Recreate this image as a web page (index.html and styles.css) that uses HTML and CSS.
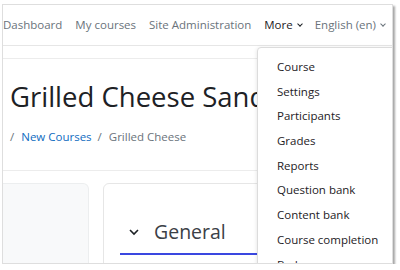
FILE: index.html
```html
<!DOCTYPE html>
<html lang="en">
<head>
    <meta charset="UTF-8">
    <title>Grilled Cheese Sandwich</title>
    <link rel="stylesheet" href="styles.css">
</head>
<body>
    <div class="shot">
        <nav class="navbar">
            <a href="#">Dashboard</a>
            <a href="#">My courses</a>
            <a href="#">Site Administration</a>
            <a href="#" class="active">More <span class="caret"></span></a>
            <a href="#">English &#8206;(en)&#8206; <span class="caret"></span></a>

            <ul class="dropdown-menu">
                <li><a href="#">Course</a></li>
                <li><a href="#">Settings</a></li>
                <li><a href="#">Participants</a></li>
                <li><a href="#">Grades</a></li>
                <li><a href="#">Reports</a></li>
                <li><a href="#">Question bank</a></li>
                <li><a href="#">Content bank</a></li>
                <li><a href="#">Course completion</a></li>
                <li><a href="#">Badges</a></li>
            </ul>
        </nav>

        <div class="page">
            <header class="page-header">
                <h1>Grilled Cheese Sandwich</h1>
                <ol class="breadcrumb">
                    <li><a href="#">New Courses</a></li>
                    <li>Grilled Cheese</li>
                </ol>
            </header>

            <div class="course-content">
                <aside class="course-index"></aside>
                <section class="section-card">
                    <h3 class="section-title">
                        <svg width="12" height="12" viewBox="0 0 12 12"><path d="M2 4 L6 8 L10 4" fill="none" stroke="#1d2125" stroke-width="1.6"/></svg>
                        General
                    </h3>
                </section>
            </div>
        </div>
    </div>
</body>
</html>
```

FILE: styles.css
```css
/* General Styles */
body {
    margin: 0;
    padding: 4px 0 0 2px;
    background-color: #fff;
    font-family: "Open Sans", "Noto Sans", sans-serif;
    color: #1d2125;
}

a {
    text-decoration: none;
}

/* Screenshot frame */
.shot {
    position: relative;
    width: 389px;
    height: 258px;
    border: 1px solid #dedede;
    box-shadow: 2px 2px 2px rgba(0, 0, 0, 0.35);
    overflow: hidden;
    background-color: #fff;
}

/* Navbar */
.navbar {
    display: flex;
    align-items: center;
    gap: 13px;
    height: 39px;
    padding: 0 0 1px 0;
    border-bottom: 1px solid #e6e6e6;
    font-size: 11.5px;
    white-space: nowrap;
}

.navbar > a {
    color: #6a737b;
}

.navbar > a.active {
    color: #1d2125;
}

.caret {
    display: inline-block;
    width: 3px;
    height: 3px;
    margin: 0 0 3px 2px;
    border-right: 1px solid currentColor;
    border-bottom: 1px solid currentColor;
    transform: rotate(45deg);
}

/* Dropdown */
.dropdown-menu {
    position: absolute;
    top: 42px;
    left: 254px;
    width: 150px;
    margin: 0;
    padding: 7px 0;
    list-style: none;
    background-color: #fff;
    border: 1px solid #dcdcdc;
    border-radius: 4px;
    box-shadow: 0 1px 4px rgba(0, 0, 0, 0.12);
}

.dropdown-menu li a {
    display: block;
    height: 24.7px;
    line-height: 24.7px;
    padding-left: 19px;
    font-size: 11.5px;
    color: #1d2125;
}

/* Page header */
.page {
    border-top: 1px solid #ececec;
    margin-top: 12px;
}

.page-header {
    padding: 19px 0 0 7px;
    border-bottom: 1px solid #ececec;
    height: 92px;
}

.page-header h1 {
    margin: 0;
    font-size: 27.5px;
    font-weight: 400;
    white-space: nowrap;
    color: #1d2125;
}

.breadcrumb {
    display: flex;
    margin: 14px 0 0;
    padding: 0;
    list-style: none;
    font-size: 11.5px;
    color: #6a737b;
}

.breadcrumb li::before {
    content: "/";
    padding: 0 7px 0 0;
}

.breadcrumb li + li::before {
    padding-left: 6px;
}

.breadcrumb a {
    color: #0f6cbf;
}

/* Course content */
.course-content {
    display: flex;
    gap: 14px;
    padding-top: 12px;
}

.course-index {
    width: 85px;
    height: 120px;
    background-color: #f8f9fa;
    border: 1px solid #eceeef;
    border-left: none;
    border-radius: 0 6px 0 0;
}

.section-card {
    flex: 1;
    height: 120px;
    border: 1px solid #e6e6e6;
    border-radius: 6px;
    padding: 34px 0 0 16px;
}

.section-title {
    display: flex;
    align-items: center;
    gap: 14px;
    margin: 0;
    padding: 0 0 8px 8px;
    font-size: 19.5px;
    font-weight: 400;
    color: #3b4046;
    border-bottom: 2px solid #3a47e0;
}
```
